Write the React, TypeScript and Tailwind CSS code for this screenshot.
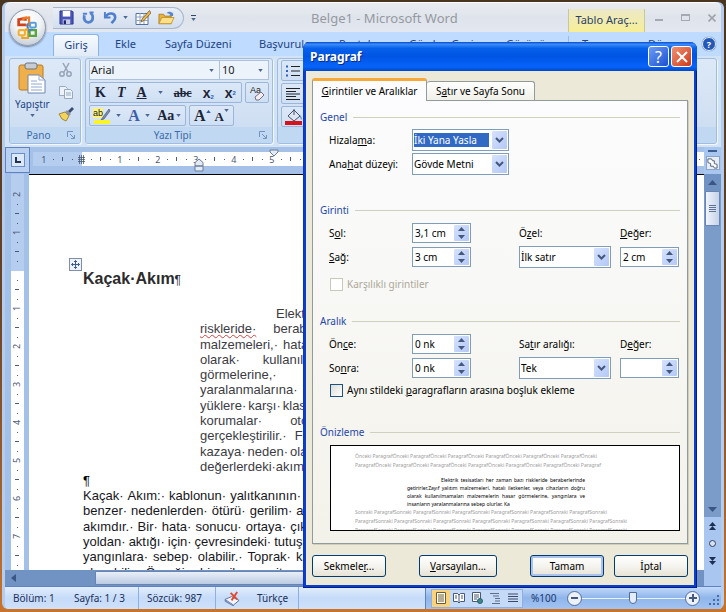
import React, { ReactNode } from "react";

const ui = "font-['Noto_Sans',sans-serif]";

function Down({ className = "" }: { className?: string }) {
  return (
    <svg viewBox="0 0 6 4" className={`h-[3px] w-[5px] shrink-0 ${className}`}>
      <path d="M0 0h6L3 4z" fill="#4a6796" />
    </svg>
  );
}

/* ---------- Word window: title bar and tabs ---------- */

function OfficeLogo() {
  return (
    <button
      aria-label="Office"
      className="absolute top-[7px] left-[7px] z-10 flex size-[37px] items-center justify-center rounded-full border border-[#8c97a8] bg-[radial-gradient(circle_at_50%_30%,#ffffff_0%,#f1f3f6_45%,#c4ccd7_85%,#e6ebf2_100%)] shadow-[0_1px_2px_#6b7d98]"
    >
      <svg viewBox="0 0 24 24" className="size-[25px]" fill="none">
        <path d="M10.500 9.500H3.500V4.500L10 3v2.500" stroke="#d3401c" strokeWidth="2.600" />
        <path d="M8 5.500V3l5.500-.5v7.500h-3" stroke="#ec7a2c" strokeWidth="2.200" />
        <rect x="14.500" y="7.500" width="5.500" height="4.500" rx="1" stroke="#5a9fdc" strokeWidth="1.900" />
        <path d="M12 8v4.500h1.500" stroke="#3f7fca" strokeWidth="1.600" />
        <rect x="3.500" y="14.500" width="6" height="5" rx="1" stroke="#f0b030" strokeWidth="2" />
        <path d="M7 20.500v1.500h5.500v-8H9.500" stroke="#f2a21e" strokeWidth="2" />
        <path d="M14 14.500h6v5.500h-6z" stroke="#5aa63c" strokeWidth="2.300" />
        <path d="M13.500 17v-3H17" stroke="#3c86c8" strokeWidth="1.500" />
      </svg>
    </button>
  );
}

function QuickAccess() {
  return (
    <div className="flex h-[22px] w-[131px] shrink-0 items-center gap-[7px] rounded-r-full border border-l-0 border-[#a9b7cd] bg-gradient-to-b from-[#e9eef6] to-[#d3deee] pl-[6px]">
      <button aria-label="Kaydet">
        <svg viewBox="0 0 16 16" className="size-[15px]">
          <path d="M1 1h13l1 1v13H1z" fill="#4a55b8" stroke="#2b3590" />
          <path d="M4 1h8v6H4z" fill="#fff" />
          <path d="M4 10h8v5H4z" fill="#c9cfe8" />
          <path d="M5 11h2.500v4H5z" fill="#20266e" />
        </svg>
      </button>
      <button aria-label="Yinele">
        <svg viewBox="0 0 16 16" className="size-[15px]" fill="none" stroke="#5584cf" strokeWidth="3">
          <path d="M3.500 5.500c-2 10 10 10 9 1.500 0-2-1-3-2.500-4" />
          <path d="M2 4h4.500M9 2.500h4.500" strokeWidth="2" />
        </svg>
      </button>
      <button aria-label="Geri al">
        <svg viewBox="0 0 16 16" className="size-[15px]" fill="none" stroke="#4d7fce" strokeWidth="2.800">
          <path d="M3 7c3-5 10-4 10 1 0 3-2 4-4 6" />
          <path d="M2 2v6h6" strokeWidth="2" />
        </svg>
      </button>
      <Down className="-ml-[2px]" />
      <button aria-label="Tablo çiz">
        <svg viewBox="0 0 16 16" className="size-[16px]">
          <path d="M1 3.500h12v11H1z" fill="#fff" stroke="#55709c" />
          <path d="M1 7h12M1 10.500h12M5 3v11M9 3v11" stroke="#8ba3c7" />
          <path d="M14.500 0.500 7 9l-1 3 3-1.500L16 3z" fill="#e8b64c" stroke="#6a5324" strokeWidth=".7" />
        </svg>
      </button>
      <button aria-label="Aç">
        <svg viewBox="0 0 18 16" className="h-[16px] w-[17px]">
          <path d="M1 14V4h5l1 2h7v8z" fill="#e9b33c" stroke="#a4751a" strokeWidth=".8" />
          <path d="M1 14 4 7.500h13L14 14z" fill="#ffe08a" stroke="#b98a25" strokeWidth=".8" />
          <path d="M9 3c2-2 5-2 6 0l1-1v4h-4l1-1c-1-2-3-2-4-2z" fill="#5c86c4" />
        </svg>
      </button>
    </div>
  );
}

function TitleBar() {
  return (
    <header className="flex h-[30px] shrink-0 items-center rounded-t-[6px] border-t border-white bg-gradient-to-b from-[#e9ebf0] via-[#dfe4ec] to-[#e3e8f0]">
      <div className="w-[48px] shrink-0" />
      <QuickAccess />
      <button aria-label="Özelleştir" className="ml-[7px] flex flex-col items-center gap-[2px]">
        <span className="h-px w-[5px] bg-[#33466b]" />
        <Down />
      </button>
      <h1 className="min-w-0 flex-1 truncate pl-[115px] text-[13px] leading-[18px] text-[#9599a1]">
        Belge1 - Microsoft Word
      </h1>
      <div className="flex h-[23px] w-[77px] shrink-0 items-center justify-center self-end border-x border-[#c9c79c] bg-gradient-to-b from-[#ebe9c9] to-[#f8ee94] text-[11px] text-[#2a3f66]">
        Tablo Araç...
      </div>
      <div className="flex w-[76px] shrink-0 items-center gap-[18px] pl-[10px]">
        <button aria-label="Simge durumuna küçült" className="mt-[5px] h-[2px] w-[8px] bg-[#a5a9b1]" />
        <button aria-label="Geri yükle" className="h-[7px] w-[9px] border border-t-2 border-[#a5a9b1]" />
        <button aria-label="Kapat">
          <svg viewBox="0 0 8 8" className="size-[8px]" stroke="#9fa3ab" strokeWidth="1.600">
            <path d="M.5.5l7 7M7.500.5l-7 7" />
          </svg>
        </button>
      </div>
    </header>
  );
}

function Tab({ children, className }: { children: ReactNode; className: string }) {
  return <button className={`shrink-0 text-left ${className}`}>{children}</button>;
}

function Tabs() {
  return (
    <nav className="flex h-[24px] shrink-0 items-center overflow-hidden bg-[#bfdbff] pl-[48px] text-[11px] text-[#1d4484]">
      <button className="mt-[2px] h-[22px] w-[46px] shrink-0 rounded-t-[3px] border border-b-0 border-[#8db2e3] bg-gradient-to-b from-[#f6faff] to-[#e0ebf8]">
        Giriş
      </button>
      <Tab className="ml-[16px] w-[50px]">Ekle</Tab>
      <Tab className="w-[94px]">Sayfa Düzeni</Tab>
      <Tab className="w-[80px]">Başvurular</Tab>
      <Tab className="w-[70px]">Postalar</Tab>
      <Tab className="w-[97px]">Gözden Geçir</Tab>
      <Tab className="w-[62px]">Görünüm</Tab>
      <Tab className="w-[80px] border-l border-[#a2b9d8] pl-[13px]">Tasarım</Tab>
      <Tab className="w-[49px]">Düzen</Tab>
      <button
        aria-label="Yardım"
        className="ml-[5px] size-[14px] shrink-0 rounded-full border border-[#eaf2fc] bg-[#2458b8] text-[9px] leading-[11px] font-bold text-white shadow-[0_0_1px_#1a3c80]"
      >
        ?
      </button>
    </nav>
  );
}

/* ---------- Ribbon ---------- */

function Group({ title, className, children }: { title: string; className: string; children: ReactNode }) {
  return (
    <section
      className={`flex h-[86px] flex-col overflow-hidden rounded-[3px] border border-[#a0bde0] bg-gradient-to-b from-[#dde9f7] to-[#cbdcf1] shadow-[1px_1px_0_#f2f7fd] ${className}`}
    >
      <div className="min-h-0 flex-1">{children}</div>
      <div className="flex h-[16px] shrink-0 items-center bg-[#c0d8f2] pr-[5px] text-[10px] text-[#3e6aaa]">
        <span className="flex-1 text-center">{title}</span>
        {title && (
          <svg viewBox="0 0 8 8" className="size-[8px]" fill="none" stroke="#7592bd">
            <path d="M.5 6V.5H6M3 3l4 4M7.500 4v3.500H4" />
          </svg>
        )}
      </div>
    </section>
  );
}

const box = "flex h-[21px] items-center rounded-[2px] border border-[#9ab6da] bg-gradient-to-b from-[#dce8f7] to-[#cfe0f4]";

function Ribbon() {
  return (
    <div className="flex h-[91px] shrink-0 gap-[4px] bg-[#d3e3f6] px-[4px] pt-[2px]">
      <Group title="Pano" className="w-[72px] shrink-0">
        <div className="flex h-full justify-between pt-[3px] pr-[6px] pl-[5px]">
          <button className="flex flex-col items-center text-[10px] leading-[14px] text-[#1d4484]">
            <svg viewBox="0 0 28 32" className="h-[32px] w-[28px]">
              <rect x="1" y="3" width="24" height="25" rx="2" fill="#efb04c" stroke="#b87a22" />
              <rect x="7" y="1" width="12" height="6" rx="2" fill="#c7ccd4" stroke="#6d7480" />
              <path d="M10 13h11l6 5v13H10z" fill="#fff" stroke="#6c86b3" />
              <path d="M21 13v5h6M13 19h6M13 22h11M13 25h11M13 28h11" fill="none" stroke="#90a8cf" />
            </svg>
            <span className="mt-[3px]">Yapıştır</span>
            <Down className="mt-[3px]" />
          </button>
          <div className="flex flex-col items-center gap-[6px]">
            <button aria-label="Kes">
              <svg viewBox="0 0 16 16" className="size-[16px]" fill="none" stroke="#97a3b6" strokeWidth="1.500">
                <path d="M5 1l5 9M11 1l-5 9" />
                <circle cx="4" cy="12" r="2.200" />
                <circle cx="11" cy="12" r="2.200" />
              </svg>
            </button>
            <button aria-label="Kopyala">
              <svg viewBox="0 0 16 16" className="size-[16px]" fill="#eef3fa" stroke="#98a9c4">
                <path d="M1.500 2.500h6l2 2v7h-8z" />
                <path d="M6.500 5.500h6l2 2v7h-8zM8 9h5M8 11h5" />
              </svg>
            </button>
            <button aria-label="Biçim boyacısı">
              <svg viewBox="0 0 16 16" className="size-[16px]">
                <path d="M1 8l6-2 4 4-3 5-4-2z" fill="#f4d35a" stroke="#8d7420" strokeWidth=".8" />
                <path d="M7 6l2-2 4 4-2 2z" fill="#8e949e" />
                <path d="M10 5l4-4 2 2-4 4z" fill="#3b4c6e" />
              </svg>
            </button>
          </div>
        </div>
      </Group>

      <Group title="Yazı Tipi" className="w-[188px] shrink-0">
        <div className="flex flex-col gap-[2px] px-[3px] pt-px">
          <div className="flex h-[20px] border border-[#abc1de] bg-[#edf3fb] text-[11px] text-[#1a1a1a]">
            <button className="flex w-[130px] items-center justify-between border-r border-[#abc1de] pr-[5px] pl-px">
              Arial <Down />
            </button>
            <button className="flex flex-1 items-center justify-between pr-[5px] pl-[2px]">
              10 <Down />
            </button>
          </div>
          <div className="flex justify-between font-['Liberation_Serif',serif] text-[14px] leading-[18px] text-[#1c2536]">
            <div className={`${box} w-[153px] justify-between pr-[5px] pl-[5px]`}>
              <button className="font-bold">K</button>
              <button className="font-bold italic">T</button>
              <button className="font-bold underline">A</button>
              <Down />
              <button className="text-[12px] font-bold line-through">abc</button>
              <button className="font-['Liberation_Sans',sans-serif] text-[14px] font-bold">
                x<sub className="text-[6px] text-[#2a62b8]">2</sub>
              </button>
              <button className="font-['Liberation_Sans',sans-serif] text-[14px] font-bold">
                x<sup className="text-[6px] text-[#2a62b8]">2</sup>
              </button>
            </div>
            <button aria-label="Biçimlendirmeyi temizle" className={`${box} w-[24px] justify-center`}>
              <svg viewBox="0 0 18 18" className="size-[18px]">
                <text x="2" y="9" fontSize="9" fontFamily="Liberation Sans" fill="#222">Aa</text>
                <path d="M7 13l6-5 3 3-5 5H8z" fill="#f3eef0" stroke="#7a6f86" />
              </svg>
            </button>
          </div>
          <div className="flex gap-[3px] font-['Liberation_Serif',serif] leading-[18px] text-[#1c2536]">
            <div className={`${box} w-[97px] justify-between pr-[4px] pl-[3px]`}>
              <button aria-label="Vurgu rengi">
                <svg viewBox="0 0 18 18" className="size-[18px]">
                  <rect x="0" y="1" width="10" height="10" fill="#fdf27a" />
                  <text x="0" y="9" fontSize="9" fontFamily="Liberation Sans" fill="#222">ab</text>
                  <path d="M16 2l-6 8-2 3 3-1 6-8z" fill="#7b8db0" stroke="#3c4c70" strokeWidth=".6" />
                  <rect x="1" y="13" width="16" height="4" fill="#f8f32b" />
                </svg>
              </button>
              <Down className="-ml-[3px]" />
              <button className="text-[16px] font-bold text-[#3c60a8]">A</button>
              <Down className="-ml-[3px]" />
              <button className="text-[14px] font-bold">Aa</button>
              <Down className="-ml-[6px]" />
            </div>
            <div className={`${box} w-[45px] justify-between px-[4px] font-bold`}>
              <button className="flex text-[16px]">
                A
                <svg viewBox="0 0 6 4" className="mt-[3px] h-[3px] w-[5px]"><path d="M0 4h6L3 0z" fill="#2b5cab" /></svg>
              </button>
              <button className="flex pt-[2px] text-[13px]">
                A
                <Down className="mt-px" />
              </button>
            </div>
          </div>
        </div>
      </Group>

      <Group title="" className="min-w-0 flex-1">
        <div className="flex w-[60px] flex-col gap-[2px] px-[3px] pt-px">
          <button aria-label="Madde işaretleri" className={`${box} px-[4px]`}>
            <svg viewBox="0 0 14 14" className="size-[14px]" stroke="#222">
              <path d="M5 2.500h9M5 7h9M5 11.500h9" />
              <path d="M0 2.500h2M0 7h2M0 11.500h2" stroke="#2a62c8" strokeWidth="2" />
            </svg>
          </button>
          <button aria-label="Sola hizala" className={`${box} px-[4px]`}>
            <svg viewBox="0 0 14 12" className="h-[12px] w-[14px]" stroke="#222">
              <path d="M0 .5h14M0 3.500h10M0 6h14M0 8.500h10M0 11.500h14" />
            </svg>
          </button>
          <button aria-label="Gölgelendirme" className={`${box} px-[3px]`}>
            <svg viewBox="0 0 17 18" className="h-[18px] w-[17px]">
              <path d="M3 8l6-6 6 6-6 5z" fill="#dfe6f2" stroke="#44516e" />
              <path d="M9 1v6" stroke="#44516e" />
              <path d="M15 7c2 2 2 4 1 5z" fill="#3c6ac0" />
              <rect x="0" y="13" width="17" height="4" fill="#d4141c" />
            </svg>
          </button>
        </div>
      </Group>
    </div>
  );
}

/* ---------- Rulers ---------- */

function Ticks({ labels, vertical }: { labels: string[]; vertical?: boolean }) {
  return (
    <>
      {labels.map((label, i) => (
        <div
          key={i}
          className={`grid shrink-0 items-center justify-items-center ${vertical ? "h-[38px] w-full grid-rows-4" : "h-full w-[38px] grid-cols-4"}`}
        >
          {label === "#" ? (
            <svg viewBox="0 0 7 9" className="h-[9px] w-[7px]" stroke="#4b5a76">
              <path d="M1.500 0v9M3.500 0v9M5.500 0v9M0 2.500h7M0 4.500h7M0 6.500h7" strokeWidth=".8" />
            </svg>
          ) : (
            <span className={`leading-[9px] ${vertical ? "-rotate-90" : ""}`}>{label}</span>
          )}
          <span className="size-px bg-[#4b5a76]" />
          <span className={`bg-[#4b5a76] ${vertical ? "h-px w-[4px]" : "h-[4px] w-px"}`} />
          <span className="size-px bg-[#4b5a76]" />
        </div>
      ))}
    </>
  );
}

function HorizontalRuler() {
  return (
    <div className="flex h-[27px] shrink-0 items-start bg-[#a5c1e7]">
      <button
        aria-label="Sekme türü"
        className="flex h-[26px] w-[25px] shrink-0 items-center justify-center border border-[#5f83c0] bg-[#b9d0f0]"
      >
        <span className="flex size-[14px] items-center justify-center border border-[#6c8ec6] bg-[#dbe8fa]">
          <span className="size-[6px] border-b-2 border-l-2 border-[#25324e]" />
        </span>
      </button>
      <div className="relative mt-[5px] ml-[3px] min-w-0 flex-1">
        <div className="flex h-[14px] overflow-hidden bg-[linear-gradient(to_right,#b5cdee_49px,#ffffff_49px)] pl-[6px] text-[9px] text-[#4b5a76]">
          <Ticks labels={["1", "#", "1", "2", "3", "4", "5", "6", "7", "8", "9", "10", "11", "12", "13", "14", "15", "16"]} />
        </div>
        <svg viewBox="0 0 10 14" className="absolute top-[6px] left-[161px] h-[14px] w-[10px]" fill="#e3ebf5" stroke="#6b7c98">
          <path d="M1 8V4.500L5 1l4 3.500V8zM1 8h8v5H1z" />
        </svg>
        <svg viewBox="0 0 10 8" className="absolute -top-[3px] left-[236px] h-[8px] w-[10px]" fill="#e3ebf5" stroke="#6b7c98">
          <path d="M1 1h8v2L5 7 1 3z" />
        </svg>
      </div>
    </div>
  );
}

function VerticalRuler() {
  return (
    <div className="flex w-[24px] shrink-0 justify-center bg-[#a3c0e8]">
      <div className="flex w-[13px] flex-col overflow-hidden bg-[linear-gradient(to_bottom,#b5cdee_97px,#ffffff_97px)] pt-[16px] text-[9px] text-[#4b5a76]">
        <Ticks vertical labels={["2", "1", "", "1", "2", "3", "4", "5", "6", "7", "8"]} />
      </div>
    </div>
  );
}

/* ---------- Document ---------- */

type Line = { words: string[]; gap: string; misspelt?: boolean };

const indented: Line[] = [
  { words: ["Elektrik·", "tesisatları·"], gap: "gap-1 pl-[76px]" },
  { words: ["riskleride·", "beraberlerinde·"], gap: "gap-[17px]", misspelt: true },
  { words: ["malzemeleri,·", "hatalı·"], gap: "gap-[5px]" },
  { words: ["olarak·", "kullanılmamaları·"], gap: "gap-[23px]" },
  { words: ["görmelerine,·"], gap: "gap-1" },
  { words: ["yaralanmalarına·"], gap: "gap-1" },
  { words: ["yüklere·", "karşı·", "klasik·"], gap: "gap-[2px]" },
  { words: ["korumalar·", "otomatik·"], gap: "gap-[28px]" },
  { words: ["gerçekleştirilir.·", "Fakat·"], gap: "gap-[8px]" },
  { words: ["kazaya·", "neden·", "olabilecek·"], gap: "gap-[2px]" },
  { words: ["değerlerdeki·akım·"], gap: "gap-px" },
];

const full: Line[] = [
  { words: ["Kaçak·", "Akım:·", "kablonun·", "yalıtkanının·", "zarar·"], gap: "gap-1" },
  { words: ["benzer·", "nedenlerden·", "ötürü·", "gerilim·", "altında·"], gap: "gap-1" },
  { words: ["akımdır.·", "Bir·", "hata·", "sonucu·", "ortaya·", "çıkar·"], gap: "gap-1" },
  { words: ["yoldan·", "aktığı·", "için·", "çevresindeki·", "tutuşabilen·"], gap: "gap-[3px]" },
  { words: ["yangınlara·", "sebep·", "olabilir.·", "Toprak·", "kaçağı·"], gap: "gap-[5px]" },
  { words: ["oluşabilir.·", "Örneğin·", "bir·", "cihaza·", "ait·", "gerilim·"], gap: "gap-1" },
];

function DocLine({ line }: { line: Line }) {
  return (
    <p className={`flex items-center whitespace-nowrap ${line.gap}`}>
      {line.words.map((w, i) => (
        <span
          key={i}
          className={line.misspelt && i === 0 ? "underline decoration-[#d04040] decoration-wavy decoration-1 underline-offset-1" : ""}
        >
          {w}
        </span>
      ))}
    </p>
  );
}

function Page() {
  return (
    <article className="min-w-0 flex-1 overflow-hidden bg-white pl-[54px] font-['Liberation_Sans',sans-serif] text-[13px] leading-[15px]">
      <div className="-ml-[14px] pt-[83px]">
        <svg viewBox="0 0 13 13" className="size-[13px]" fill="none" stroke="#3b5b93">
          <rect x=".5" y=".5" width="12" height="12" stroke="#7f8fab" fill="#eef3fb" />
          <path d="M6.500 2.500v8M2.500 6.500h8M5 4l1.500-1.500L8 4M5 9l1.500 1.500L8 9M4 5 2.500 6.500 4 8M9 5l1.500 1.500L9 8" />
        </svg>
      </div>
      <h2 className="text-[16px] leading-[16px] font-bold text-[#2c2c2c]">
        Kaçak·Akım<span className="text-[12px] font-normal">¶</span>
      </h2>
      <div className="mt-[18px] ml-[117px] grid h-[168px] auto-rows-fr text-[#3c3c44]">
        {indented.map((l, i) => (
          <DocLine key={i} line={l} />
        ))}
      </div>
      <p className="leading-[14px]">¶</p>
      <div className="grid h-[92px] auto-rows-fr text-[#16161c]">
        {full.map((l, i) => (
          <DocLine key={i} line={l} />
        ))}
      </div>
    </article>
  );
}

/* ---------- Scroll bars and status bar ---------- */

function VerticalScroll() {
  return (
    <aside className="flex w-[17px] shrink-0 flex-col items-center bg-[#a8c6f0]">
      <span className="mt-[3px] h-[2px] w-[9px] bg-[#3f5e92]" />
      <button aria-label="Cetvel" className="mt-[4px] flex size-[14px] items-center justify-center border border-[#8ba4c9] bg-[#e6edf7]">
        <svg viewBox="0 0 12 12" className="size-[11px]" fill="#fff" stroke="#4c5a72">
          <path d="M1 1h4l1 2h2v3l3 1v4H8L7 9H4V6L1 5z" />
        </svg>
      </button>
      <div className="mt-[4px] flex w-full flex-1 flex-col items-center bg-[#7b9bc9]">
        <button aria-label="Yukarı" className="flex h-[17px] w-full items-center justify-center bg-[#7193c4]">
          <svg viewBox="0 0 9 5" className="h-[5px] w-[9px]"><path d="M0 5h9L4.500 0z" fill="#3b5685" /></svg>
        </button>
        <div className="flex h-[35px] w-[15px] flex-col items-center justify-center gap-px rounded-[1px] border border-[#6784b3] bg-gradient-to-r from-[#f0f4fa] to-[#c5d3e8]">
          <span className="h-px w-[7px] bg-[#5d7296]" />
          <span className="h-px w-[7px] bg-[#5d7296]" />
          <span className="h-px w-[7px] bg-[#5d7296]" />
          <span className="h-px w-[7px] bg-[#5d7296]" />
        </div>
        <button aria-label="Aşağı" className="mt-auto flex h-[16px] w-full items-center justify-center">
          <svg viewBox="0 0 9 5" className="h-[5px] w-[9px]"><path d="M0 0h9L4.500 5z" fill="#3b5685" /></svg>
        </button>
      </div>
      <div className="flex h-[69px] flex-col items-center gap-[10px] pt-[5px]">
        <button aria-label="Önceki sayfa">
          <svg viewBox="0 0 7 8" className="h-[8px] w-[7px]" fill="#1d2f52"><path d="M0 4h7L3.500 0zM0 8h7L3.500 4z" /></svg>
        </button>
        <button aria-label="Gözat" className="size-[7px] rounded-full border border-[#33415e] bg-[#d8e2f2]" />
        <button aria-label="Sonraki sayfa">
          <svg viewBox="0 0 7 8" className="h-[8px] w-[7px]" fill="#1d2f52"><path d="M0 0h7L3.500 4zM0 4h7L3.500 8z" /></svg>
        </button>
      </div>
    </aside>
  );
}

function StatusBar() {
  const cell = "flex h-full items-center";
  const view = "flex h-[17px] w-[18px] items-center justify-center";
  return (
    <footer className="flex h-[23px] shrink-0 items-center rounded-b-[4px] border-t border-[#5f83c0] bg-gradient-to-b from-[#e3eefc] via-[#c5dbf8] to-[#cfe1fa] text-[10px] whitespace-nowrap text-[#1b2f5c]">
      <span className={`${cell} w-[61px] pl-[8px]`}>Bölüm: 1</span>
      <span className={`${cell} w-[73px] border-r border-[#8fb0de] pl-[8px]`}>Sayfa: 1 / 3</span>
      <span className={`${cell} w-[77px] border-r border-[#8fb0de] pl-[8px]`}>Sözcük: 987</span>
      <span className={`${cell} w-[83px] gap-[16px] border-r border-[#8fb0de] pl-[8px]`}>
        <svg viewBox="0 0 18 16" className="h-[15px] w-[17px]">
          <path d="M1 9l7-3 8 4-6 5z" fill="#f2f5fb" stroke="#5b6f9c" />
          <path d="M1 9v2l9 5v-1" fill="#7f9ccf" stroke="#5b6f9c" strokeWidth=".7" />
          <path d="M7 2l7 7M14 1L8 10" stroke="#e2482c" strokeWidth="2" />
        </svg>
        Türkçe
      </span>
      <div className="flex-1" />
      <div className="flex h-full w-[296px] shrink-0 items-center border-l border-[#5f83c0] bg-gradient-to-b from-[#c3dafa] via-[#8fb5ea] to-[#a3c4f2] pl-[5px]">
        <div className="flex border border-[#8fb0de] bg-[#c4daf6]">
          <button aria-label="Sayfa düzeni" className={`${view} bg-[#fbd27c]`}>
            <svg viewBox="0 0 12 12" className="size-[12px]" fill="#fff" stroke="#6c5b2e"><path d="M1.500.5h9v11h-9zM3 3h6M3 5h6M3 7h6M3 9h6" /></svg>
          </button>
          <button aria-label="Tam ekran okuma" className={view}>
            <svg viewBox="0 0 12 12" className="size-[12px]" fill="#fff" stroke="#47577a"><path d="M.5 1.500h4L6 3l1.500-1.500h4v8h-4L6 11 4.500 9.500h-4zM6 3v8M2 4h2M2 6h2M8 4h2M8 6h2" /></svg>
          </button>
          <button aria-label="Web düzeni" className={view}>
            <svg viewBox="0 0 12 12" className="size-[12px]" fill="#fff" stroke="#47577a"><path d="M1.500.5h8v9h-8zM3 3h5M3 5h5M3 7h3" /><circle cx="9" cy="9" r="2.500" fill="#3e8a86" stroke="#2c5f78" /></svg>
          </button>
          <button aria-label="Anahat" className={view}>
            <svg viewBox="0 0 12 12" className="size-[12px]" stroke="#5d6c8a"><path d="M1 1.500h9M4 4h6M6 6.500h5M6 9h5M3 11.500h8" /></svg>
          </button>
          <button aria-label="Taslak" className={view}>
            <svg viewBox="0 0 12 12" className="size-[12px]" stroke="#3c4a68"><path d="M1 2h10M1 4.500h10M1 7h10M1 9.500h10" /></svg>
          </button>
        </div>
        <span className="w-[44px] pl-[8px] text-[#1b3770]">%100</span>
        <button aria-label="Uzaklaştır" className="flex size-[15px] shrink-0 items-center justify-center rounded-full border border-[#4f6c9f] bg-[#edf2fa]">
          <span className="h-[2px] w-[7px] bg-[#44597f]" />
        </button>
        <input
          type="range"
          aria-label="Yakınlaştırma"
          min={0}
          max={100}
          defaultValue={49}
          className="h-[16px] w-[103px] appearance-none bg-[linear-gradient(#e9f1fc,#e9f1fc)] bg-[length:100%_1px] bg-center bg-no-repeat [&::-webkit-slider-thumb]:h-[12px] [&::-webkit-slider-thumb]:w-[8px] [&::-webkit-slider-thumb]:appearance-none [&::-webkit-slider-thumb]:rounded-b-[4px] [&::-webkit-slider-thumb]:border [&::-webkit-slider-thumb]:border-[#4f6c9f] [&::-webkit-slider-thumb]:bg-[#e4ecf8]"
        />
        <button aria-label="Yakınlaştır" className="flex size-[15px] shrink-0 items-center justify-center rounded-full border border-[#4f6c9f] bg-[#edf2fa]">
          <svg viewBox="0 0 8 8" className="size-[8px]" stroke="#44597f" strokeWidth="2"><path d="M4 0v8M0 4h8" /></svg>
        </button>
        <svg viewBox="0 0 11 11" className="mt-[4px] ml-[9px] size-[11px]" fill="#4a6ba5">
          <path d="M8 0h2v2H8zM4 4h2v2H4zM8 4h2v2H8zM0 8h2v2H0zM4 8h2v2H4zM8 8h2v2H8z" />
        </svg>
      </div>
    </footer>
  );
}

/* ---------- Dialog ---------- */

function Key({ children }: { children: string }) {
  return <span className="underline underline-offset-1">{children}</span>;
}

function Heading({ children }: { children: string }) {
  return (
    <h3 className="flex h-[14px] items-center gap-[6px] px-[7px] leading-[14px] text-[#2548a8]">
      {children}
      <span className="h-px flex-1 bg-[#d0d0bf]" />
    </h3>
  );
}

function Chevron() {
  return (
    <span className="pointer-events-none flex w-[15px] shrink-0 items-center justify-center rounded-[1px] bg-gradient-to-br from-[#d6e2fd] to-[#b3c8f6]">
      <svg viewBox="0 0 9 6" className="h-[6px] w-[9px]" fill="none" stroke="#43577f" strokeWidth="2"><path d="M1 1l3.500 3.500L8 1" /></svg>
    </span>
  );
}

function Select({ id, value, className, active }: { id: string; value: string; className: string; active?: boolean }) {
  return (
    <div className={`flex h-[22px] border border-[#7f9db9] bg-white p-px ${className}`}>
      <select
        id={id}
        className={`min-w-0 flex-1 appearance-none rounded-none text-left outline-none ${active ? "my-[2px] mr-[3px] bg-[#316ac5] text-white" : "bg-white"}`}
      >
        <option>{value}</option>
      </select>
      <Chevron />
    </div>
  );
}

function Spinner({ id, value }: { id: string; value: string }) {
  return (
    <div className="flex h-[20px] w-[59px] border border-[#7f9db9] bg-white p-px">
      <input id={id} defaultValue={value} className="min-w-0 flex-1 bg-transparent pl-px outline-none" />
      <div className="flex w-[15px] shrink-0 flex-col rounded-[1px] bg-gradient-to-br from-[#d6e2fd] to-[#b3c8f6]">
        <button aria-label="Artır" className="flex flex-1 items-center justify-center">
          <svg viewBox="0 0 7 4" className="h-[4px] w-[7px]"><path d="M0 4h7L3.500 0z" fill="#43577f" /></svg>
        </button>
        <button aria-label="Azalt" className="flex flex-1 items-center justify-center">
          <svg viewBox="0 0 7 4" className="h-[4px] w-[7px]"><path d="M0 0h7L3.500 4z" fill="#43577f" /></svg>
        </button>
      </div>
    </div>
  );
}

const row = "grid h-[24px] grid-cols-[83px_107px_101px_59px] items-center pl-[16px]";

function Preview() {
  const before = "Önceki Paragraf";
  const after = "Sonraki Paragraf";
  return (
    <div className="mr-[7px] ml-[17px] h-[86px] overflow-hidden border border-black bg-white pt-[6px] pl-[24px] text-[5px] whitespace-nowrap text-[#9c9c9c]">
      <p className="leading-[9px]">{before.repeat(6)}Önceki</p>
      <p className="leading-[9px]">Paragraf{before.repeat(6)}</p>
      <div className="mt-[6px] ml-[52px] w-[178px] leading-[8px] text-black">
        <p className="pl-[34px] [text-align-last:justify]">Elektrik tesisatları her zaman bazı riskleride beraberlerinde</p>
        <p className="[text-align-last:justify]">getirirler.Zayıf yalıtım malzemeleri, hatalı iletkenler, veya cihazların doğru</p>
        <p className="[text-align-last:justify]">olarak kullanılmamaları malzemelerin hasar görmelerine, yangınlara ve</p>
        <p>insanların yaralanmalarına sebep olurlar. Ka</p>
      </div>
      <p className="leading-[9px]">{after.repeat(6)}Sonraki</p>
      <p className="leading-[9px]">Paragraf{after.repeat(6)}Sonraki</p>
      <p className="leading-[9px]">Paragraf{after.repeat(6)}Sonraki</p>
    </div>
  );
}

function PushButton({ className, children }: { className: string; children: ReactNode }) {
  return (
    <button className={`h-[22px] rounded-[3px] border border-[#003c74] bg-gradient-to-b from-white via-[#f5f4ef] to-[#e6e3d6] ${className}`}>
      {children}
    </button>
  );
}

function Dialog() {
  return (
    <div
      role="dialog"
      aria-label="Paragraf"
      className="absolute top-[42px] left-[303px] z-20 w-[394px] rounded-t-[7px] bg-[#0a3fc8] px-[3px] pb-[3px] text-[10px] leading-[14px] text-black shadow-[inset_-1px_-1px_0_#001e90,inset_1px_0_0_#0831d9]"
    >
      <div className="-mx-[3px] flex h-[29px] items-center rounded-t-[7px] bg-[linear-gradient(to_bottom,#0a4ad0_0%,#3a8cf8_8%,#0660ea_22%,#0054e3_50%,#0664fb_85%,#0048c8_100%)] pr-[5px] pl-[7px]">
        <h2 className="flex-1 text-[12px] font-bold text-white [text-shadow:1px_1px_0_#0a2a80]">Paragraf</h2>
        <button aria-label="Yardım" className="mr-[2px] size-[21px] rounded-[3px] border border-white bg-gradient-to-br from-[#6c9bf5] to-[#1c4fd0] text-[16px] leading-[18px] text-white">
          ?
        </button>
        <button aria-label="Kapat" className="flex size-[21px] items-center justify-center rounded-[3px] border border-white bg-gradient-to-br from-[#f09070] to-[#cc3510]">
          <svg viewBox="0 0 12 12" className="size-[12px]" stroke="#fff" strokeWidth="2"><path d="M1 1l10 10M11 1L1 11" /></svg>
        </button>
      </div>
      <div className="bg-[#ece9d8] px-[6px] pt-[7px] pb-[8px]">
        <div className="flex items-end">
          <button className="relative -mb-px h-[23px] w-[115px] rounded-t-[3px] border border-t-[3px] border-b-0 border-[#919b9c] border-t-[#f5a93a] bg-[#fcfcfe]">
            <Key>G</Key>irintiler ve Aralıklar
          </button>
          <button className="h-[19px] w-[108px] rounded-t-[3px] border border-b-0 border-l-0 border-[#919b9c] bg-gradient-to-b from-white to-[#f0efe8]">
            S<Key>a</Key>tır ve Sayfa Sonu
          </button>
        </div>
        <div className="h-[444px] border border-[#919b9c] bg-gradient-to-b from-[#fcfcfe] to-[#f3f2ea] pt-[9px] shadow-[1px_1px_0_#d0cebf]">
          <Heading>Genel</Heading>
          <div className="pt-[4px]">
            <div className={row}>
              <label htmlFor="align">Hizala<Key>m</Key>a:</label>
              <Select id="align" value="İki Yana Yasla" className="w-[97px]" active />
            </div>
            <div className={row}>
              <label htmlFor="outline">Ana<Key>h</Key>at düzeyi:</label>
              <Select id="outline" value="Gövde Metni" className="w-[97px]" />
            </div>
          </div>
          <div className="pt-[27px]">
            <Heading>Girinti</Heading>
          </div>
          <div className="pt-[4px]">
            <div className={row}>
              <label htmlFor="left">S<Key>o</Key>l:</label>
              <Spinner id="left" value="3,1 cm" />
              <label htmlFor="special">Ö<Key>z</Key>el:</label>
              <label htmlFor="specialBy"><Key>D</Key>eğer:</label>
            </div>
            <div className={row}>
              <label htmlFor="right"><Key>S</Key>ağ:</label>
              <Spinner id="right" value="3 cm" />
              <Select id="special" value="İlk satır" className="w-[92px]" />
              <Spinner id="specialBy" value="2 cm" />
            </div>
            <label className="flex h-[30px] items-center gap-[4px] pl-[17px] text-[#aca899]">
              <input type="checkbox" disabled className="size-[13px] appearance-none border border-[#cac8bb] bg-white" />
              Karşılıklı girintiler
            </label>
          </div>
          <div className="pt-[15px]">
            <Heading>Aralık</Heading>
          </div>
          <div className="pt-[4px]">
            <div className={row}>
              <label htmlFor="before">Ön<Key>c</Key>e:</label>
              <Spinner id="before" value="0 nk" />
              <label htmlFor="spacing">Sa<Key>t</Key>ır aralığı:</label>
              <label htmlFor="spacingBy">D<Key>e</Key>ğer:</label>
            </div>
            <div className={row}>
              <label htmlFor="after">So<Key>n</Key>ra:</label>
              <Spinner id="after" value="0 nk" />
              <Select id="spacing" value="Tek" className="w-[92px]" />
              <Spinner id="spacingBy" value="" />
            </div>
            <label className="flex h-[20px] items-center gap-[4px] pl-[17px]">
              <input type="checkbox" className="size-[13px] appearance-none border border-[#1c5180] bg-gradient-to-br from-[#dcdcd7] to-white" />
              <span>Aynı stildeki <Key>p</Key>aragrafların arasına boşluk ekleme</span>
            </label>
          </div>
          <div className="pt-[25px] pb-[6px]">
            <Heading>Önizleme</Heading>
          </div>
          <Preview />
        </div>
        <div className="flex pt-[11px]">
          <PushButton className="w-[74px]">Sekmele<Key>r</Key>...</PushButton>
          <PushButton className="ml-[33px] w-[78px]"><Key>V</Key>arsayılan...</PushButton>
          <PushButton className="ml-auto w-[74px] shadow-[inset_0_0_0_2px_#a9c2ee]">Tamam</PushButton>
          <PushButton className="ml-[10px] w-[74px]">İptal</PushButton>
        </div>
      </div>
    </div>
  );
}

export default function App() {
  return (
    <div className={`relative flex h-screen min-h-[612px] flex-col overflow-hidden bg-gradient-to-b from-[#4a3520] via-[#6b4426] to-[#c9742c] pt-[2px] pr-[2px] pb-[3px] pl-[2px] ${ui}`}>
      <div className="relative flex min-h-0 flex-1 flex-col rounded-[6px] bg-[#b4cdef] px-[3px]">
        <OfficeLogo />
        <TitleBar />
        <Tabs />
        <Ribbon />
        <div className="flex min-h-0 flex-1">
          <main className="flex min-w-0 flex-1 flex-col">
            <HorizontalRuler />
            <div className="flex min-h-0 flex-1">
              <VerticalRuler />
              <div className="flex min-w-0 flex-1 border-t border-black">
                <Page />
              </div>
            </div>
            <div className="flex h-[16px] shrink-0 items-center bg-[#7193c4] pr-[40px]">
              <button aria-label="Sola" className="flex w-[90px] shrink-0 pl-[6px]">
                <svg viewBox="0 0 5 8" className="h-[8px] w-[5px]"><path d="M5 0v8L0 4z" fill="#3b5685" /></svg>
              </button>
              <div className="h-[14px] flex-1 rounded-[1px] border border-[#6784b3] bg-gradient-to-b from-[#e9eff8] to-[#bccbe2]" />
            </div>
          </main>
          <VerticalScroll />
        </div>
        <StatusBar />
      </div>
      <Dialog />
    </div>
  );
}
